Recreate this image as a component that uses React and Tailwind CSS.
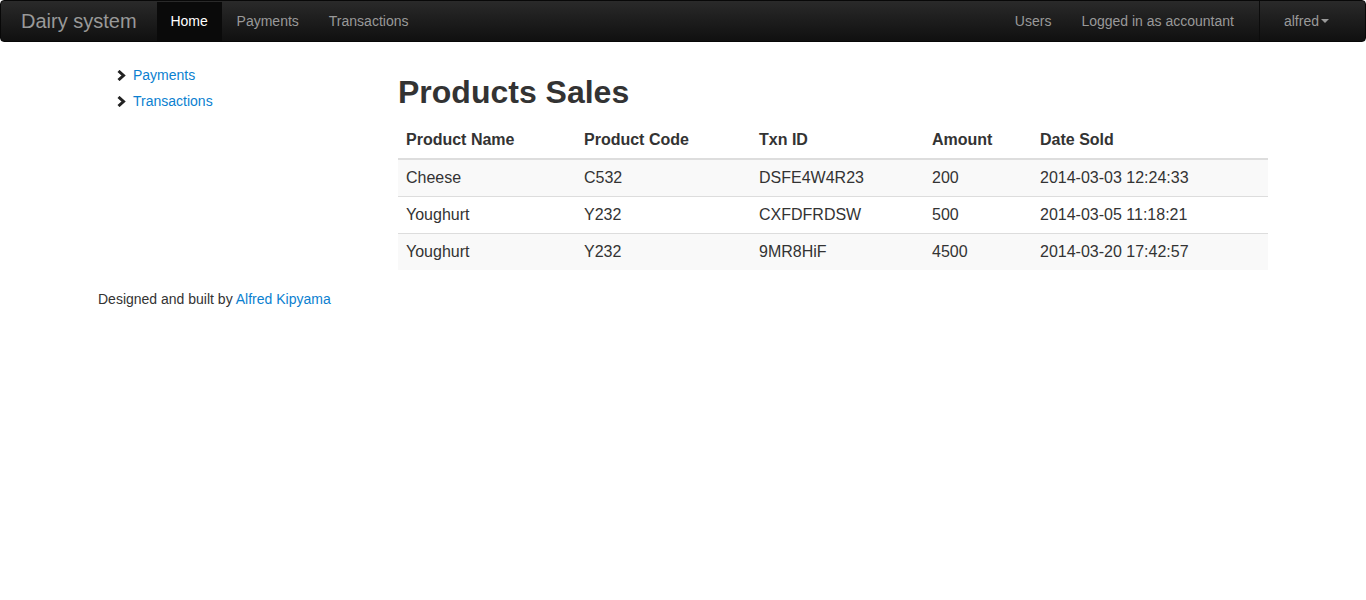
import React from "react";

const rows = [
  ["Cheese", "C532", "DSFE4W4R23", "200", "2014-03-03 12:24:33"],
  ["Youghurt", "Y232", "CXFDFRDSW", "500", "2014-03-05 11:18:21"],
  ["Youghurt", "Y232", "9MR8HiF", "4500", "2014-03-20 17:42:57"],
];

function Chevron() {
  return (
    <svg width="9" height="11" viewBox="0 0 9 11" className="mr-[7px]">
      <path d="M1.5 1 L6.5 5.5 L1.5 10" stroke="#222" strokeWidth="3" fill="none" />
    </svg>
  );
}

export default function App() {
  return (
    <div className="min-h-[600px] bg-white text-[#333]" style={{ fontFamily: '"Liberation Sans", Arial, sans-serif' }}>
      <nav className="h-[42px] flex items-stretch rounded-[4px] border border-[#080808] bg-gradient-to-b from-[#2a2a2a] to-[#101010] text-[14px]">
        <div className="pl-[20px] pr-[20px] flex items-center text-[20px] text-[#999]">Dairy system</div>
        <div className="flex items-stretch">
          <div className="px-[15px] flex items-center text-white bg-[#0a0a0a] mt-[1px] w-[65px] justify-center">Home</div>
          <div className="px-[15px] flex items-center text-[#999]">Payments</div>
          <div className="px-[15px] flex items-center text-[#999]">Transactions</div>
        </div>
        <div className="flex-1" />
        <div className="flex items-stretch">
          <div className="px-[15px] flex items-center text-[#999]">Users</div>
          <div className="px-[15px] flex items-center text-[#999]">Logged in as accountant</div>
          <div className="w-0 border-r border-[#0c0c0c] ml-[10px]" />
          <div className="pl-[24px] pr-[36px] flex items-center text-[#999]">
            alfred
            <span className="ml-[2px] inline-block w-0 h-0 border-l-[4px] border-r-[4px] border-t-[4px] border-l-transparent border-r-transparent border-t-[#999]" />
          </div>
        </div>
      </nav>

      <div className="w-[1170px] mx-auto">
        <div className="flex">
          <div className="w-[300px] pl-[19px] pt-[20px]">
            <div className="flex items-center h-[26px] text-[14px] text-[#0b7fd0]"><Chevron />Payments</div>
            <div className="flex items-center h-[26px] text-[14px] text-[#0b7fd0]"><Chevron />Transactions</div>
          </div>
          <div className="w-[870px]">
            <h1 className="text-[32px] font-bold leading-[40px] mt-[30px] mb-[10px] text-[#333]">Products Sales</h1>
            <table className="w-full text-[16px] border-collapse">
              <thead>
                <tr className="border-b-2 border-[#ddd]">
                  <th className="w-[178px] text-left font-bold px-[8px] py-[8px] leading-[20px]">Product Name</th>
                  <th className="w-[175px] text-left font-bold px-[8px] py-[8px] leading-[20px]">Product Code</th>
                  <th className="w-[173px] text-left font-bold px-[8px] py-[8px] leading-[20px]">Txn ID</th>
                  <th className="w-[108px] text-left font-bold px-[8px] py-[8px] leading-[20px]">Amount</th>
                  <th className="text-left font-bold px-[8px] py-[8px] leading-[20px]">Date Sold</th>
                </tr>
              </thead>
              <tbody>
                {rows.map((r, i) => (
                  <tr key={i} className={(i % 2 === 0 ? "bg-[#f9f9f9] " : "bg-white ") + (i > 0 ? "border-t border-[#ddd]" : "")}>
                    {r.map((c, j) => (
                      <td key={j} className="px-[8px] py-[8px] leading-[20px]">{c}</td>
                    ))}
                  </tr>
                ))}
              </tbody>
            </table>
          </div>
        </div>
        <div className="text-[14px] mt-[19px] leading-[20px]">
          Designed and built by <span className="text-[#0b7fd0]">Alfred Kipyama</span>
        </div>
      </div>
    </div>
  );
}
